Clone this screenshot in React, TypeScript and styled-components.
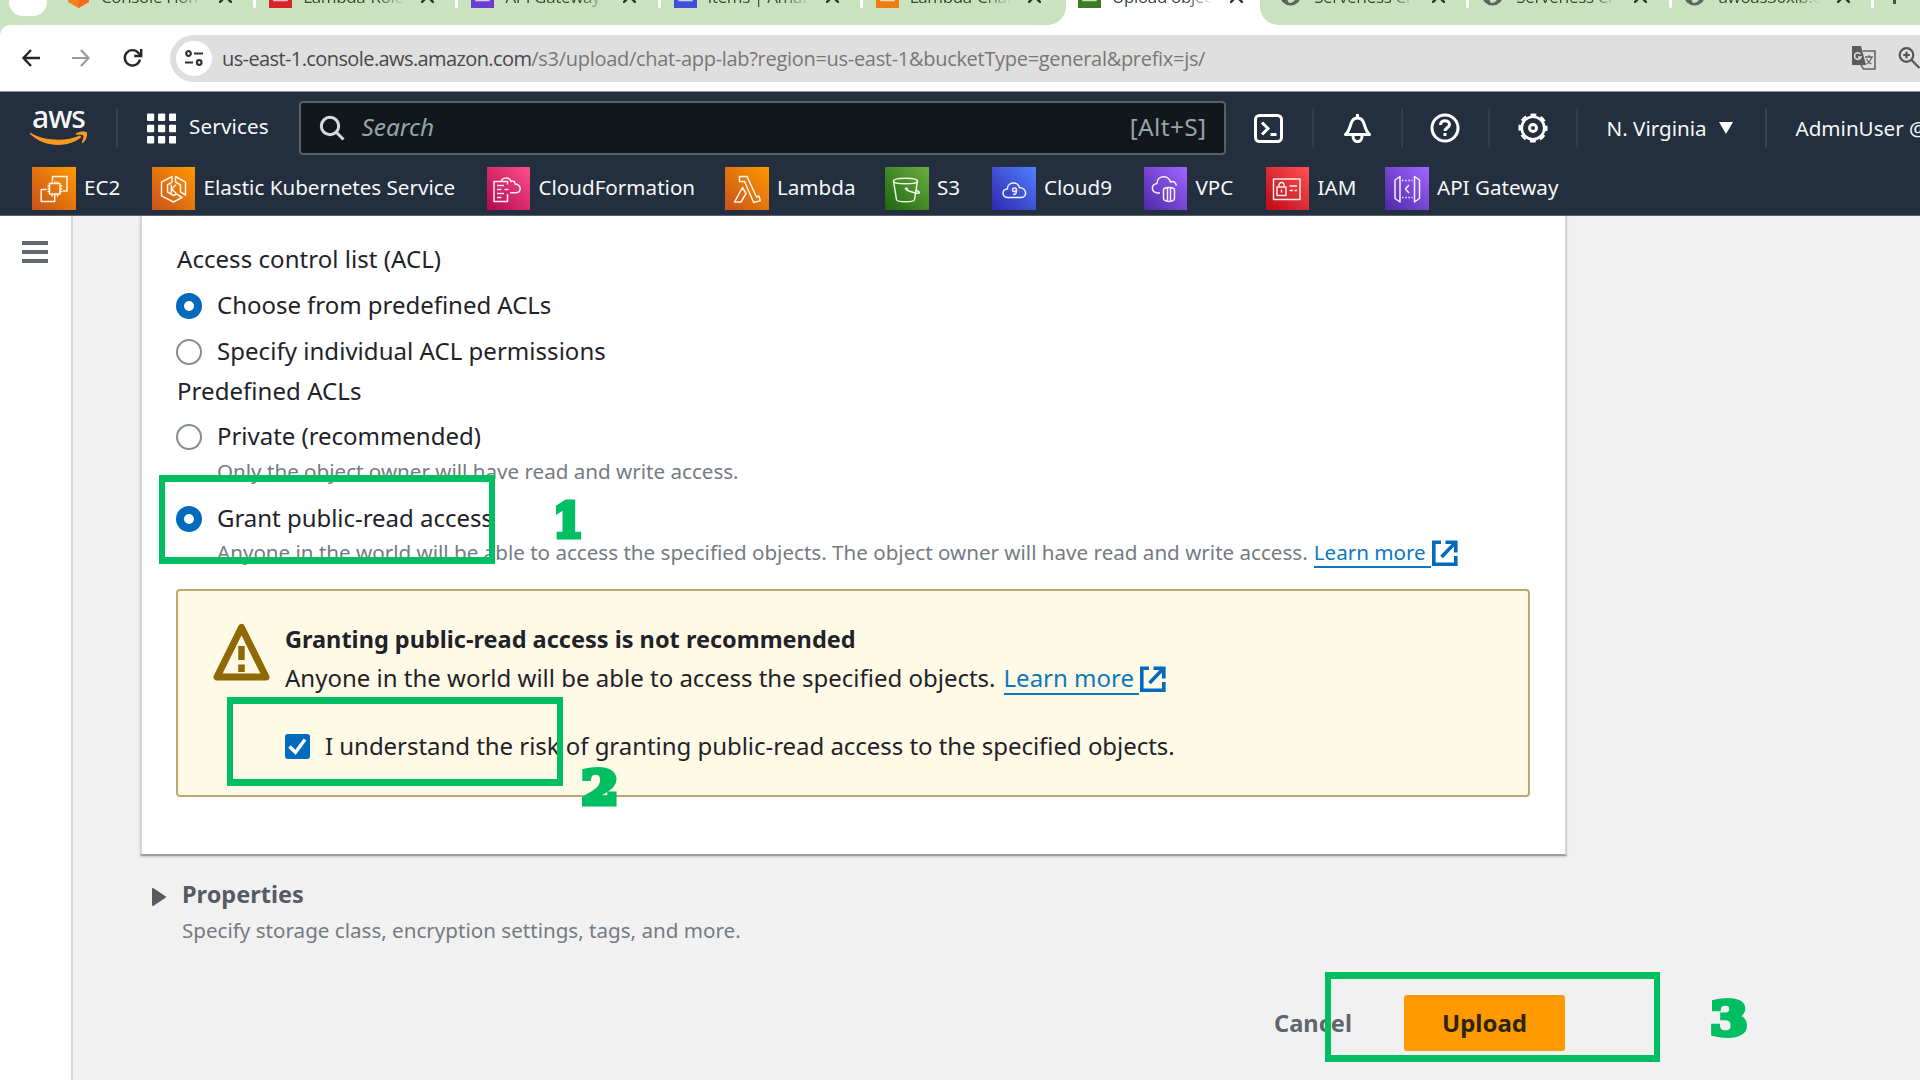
import React from 'react';
import styled, { createGlobalStyle } from 'styled-components';

const colors = {
  navy: '#232f3e',
  ink: '#1f2228',
  gray: '#747b82',
  slate: '#545b64',
  link: '#0d78bd',
  blue: '#006bbd',
  mark: '#00bf63',
};

const Global = createGlobalStyle`
  * { box-sizing: border-box; }
  html, body { margin: 0; padding: 0; }
  body {
    width: 1920px;
    height: 1080px;
    overflow: hidden;
    background: #f1f1f1;
    color: ${colors.ink};
    font-family: 'Noto Sans', 'Open Sans', sans-serif;
    font-size: 24px;
  }
  svg { display: block; flex: none; }
`;

const Screen = styled.div`
  position: relative;
  width: 1920px;
  height: 1080px;
  overflow: hidden;
  display: flex;
  flex-direction: column;
`;

/* ---------- browser tabs ---------- */

const TabStrip = styled.div`
  height: 25px;
  flex: none;
  display: flex;
  background: #c9e3be;
  padding-left: 9px;
`;

const TabSearch = styled.div`
  width: 38px;
  height: 16px;
  border-radius: 0 0 14px 14px;
  background: #fff;
  margin-right: 8px;
  flex: none;
`;

const Tab = styled.div<{ $active?: boolean; $line?: boolean }>`
  position: relative;
  flex: none;
  width: 202.2px;
  height: 25px;
  padding-left: 12px;
  overflow: ${(p) => (p.$active ? 'visible' : 'hidden')};
  background: ${(p) =>
    p.$active ? 'linear-gradient(#fff, #fff) 0 0 / 194px 25px no-repeat' : 'transparent'};

  &::after {
    content: '';
    display: ${(p) => (p.$line ? 'block' : 'none')};
    position: absolute;
    right: 1px;
    top: 0;
    width: 3px;
    height: 8px;
    border-radius: 0 0 2px 2px;
    background: #fff;
  }
`;

const TabCorner = styled.i<{ $side: 'left' | 'right' }>`
  position: absolute;
  bottom: 0;
  ${(p) => (p.$side === 'left' ? 'left: -18px' : 'left: 194px')};
  width: 18px;
  height: 18px;
  background: radial-gradient(
    circle at ${(p) => (p.$side === 'left' ? '0 0' : '100% 0')},
    transparent 17.5px,
    #fff 18px
  );
`;

const TabBody = styled.div`
  height: 60px;
  margin-top: -34px;
  display: flex;
  align-items: center;
`;

const Favicon = styled.div<{ $bg: string }>`
  width: 23px;
  height: 24px;
  flex: none;
  margin-right: 11px;
  background: ${(p) => p.$bg};
  display: flex;
  align-items: center;
  justify-content: center;
`;

const TabTitle = styled.span`
  width: 101px;
  flex: none;
  overflow: hidden;
  white-space: nowrap;
  font-family: 'Open Sans', 'Noto Sans', sans-serif;
  font-size: 17px;
  letter-spacing: -0.35px;
  padding-top: 1px;
  color: #3b463a;
  mask-image: linear-gradient(90deg, #000 74%, transparent);
`;

const TabClose = styled.div`
  margin-left: 17px;
`;

const NewTab = styled.div`
  width: 3px;
  height: 4px;
  margin: 0 0 0 18px;
  background: #4a5548;
`;

/* ---------- browser toolbar ---------- */

const Toolbar = styled.div`
  height: 66px;
  flex: none;
  background: #c9e3be;
  display: flex;
  align-items: center;
`;

const ToolbarInner = styled.div`
  width: 100%;
  height: 66px;
  background: #fff;
  border-radius: 10px 0 0 0;
  display: flex;
  align-items: center;
  padding-left: 20px;
`;

const NavIcons = styled.div`
  width: 150px;
  flex: none;
  display: flex;
  gap: 28px;
`;

const AddressBar = styled.div`
  flex: 1;
  height: 47px;
  background: #dfdfdf;
  border-radius: 24px 0 0 24px;
  display: flex;
  align-items: center;
  padding-left: 6px;
  overflow: hidden;
`;

const SiteInfo = styled.div`
  width: 36px;
  height: 35px;
  border-radius: 50%;
  background: #fff;
  display: flex;
  align-items: center;
  justify-content: center;
  margin-right: 10px;
  flex: none;
`;

const Url = styled.div`
  width: 1629px;
  flex: none;
  white-space: nowrap;
  font-family: 'Open Sans', 'Noto Sans', sans-serif;
  font-size: 20px;
  letter-spacing: -0.4px;
  color: #777;
  b {
    font-weight: 400;
    letter-spacing: -0.6px;
    color: #484848;
  }
  span { letter-spacing: -0.3px; }
`;

const BarIcons = styled.div`
  display: flex;
  align-items: center;
  gap: 22px;
`;

/* ---------- console header ---------- */

const Header = styled.header`
  height: 125px;
  flex: none;
  background: ${colors.navy};
  border-top: 1px solid #8b929a;
  border-bottom: 1px solid #59636f;
  color: #f6f7f7;
`;

const TopRow = styled.div`
  height: 72px;
  display: flex;
  align-items: center;
`;

const LogoCell = styled.div`
  width: 118px;
  height: 40px;
  padding-left: 30px;
  border-right: 2px solid #36424f;
  flex: none;
`;

const LogoText = styled.div`
  height: 23px;
  line-height: 18px;
  padding-left: 2px;
  font-size: 30px;
  font-weight: 500;
  letter-spacing: -1px;
`;

const Services = styled.div`
  width: 180.5px;
  padding-left: 29px;
  display: flex;
  align-items: center;
  gap: 13px;
  flex: none;
  font-size: 20.6px;
  span { letter-spacing: 0.15px; line-height: 28px; margin-top: -4px; }
`;

const SearchBox = styled.div`
  width: 927px;
  height: 54px;
  flex: none;
  background: #12161d;
  border: 2px solid #576064;
  border-radius: 4px;
  padding: 0 17px 0 18px;
  display: flex;
  align-items: center;
  font-size: 24.4px;
  color: #95a5a6;
  em { flex: 1; padding-left: 17px; line-height: 50px; margin-top: -2px; }
  span { line-height: 50px; margin-top: -2px; letter-spacing: 0.4px; }
`;

const Action = styled.div<{ $w: number; $line?: boolean }>`
  width: ${(p) => p.$w}px;
  height: 40px;
  flex: none;
  display: flex;
  align-items: center;
  justify-content: center;
  border-right: ${(p) => (p.$line ? '2px solid #313d4b' : 'none')};
`;

const MenuText = styled.div<{ $w: number; $line?: boolean }>`
  width: ${(p) => p.$w}px;
  height: 40px;
  flex: none;
  padding-left: 29px;
  display: flex;
  align-items: center;
  gap: 12px;
  white-space: nowrap;
  font-size: 20.6px;
  border-right: ${(p) => (p.$line ? '2px solid #36424f' : 'none')};
  span { margin-top: -1px; }
`;

const Shortcuts = styled.nav`
  display: grid;
  grid-template-columns: 119.5px 335px 238.5px 160px 107px 151.5px 122px 119.5px 200px;
  padding: 3px 0 0 32px;
`;

const Shortcut = styled.a`
  display: flex;
  align-items: center;
  gap: 8.5px;
  height: 43px;
  font-size: 20.6px;
  white-space: nowrap;
  span { margin-top: -3px; }
`;

const Tile = styled.div<{ $from: string; $to: string }>`
  width: 43.5px;
  height: 43px;
  flex: none;
  display: flex;
  align-items: center;
  justify-content: center;
  background: linear-gradient(45deg, ${(p) => p.$from}, ${(p) => p.$to});
`;

/* ---------- page ---------- */

const Page = styled.div`
  flex: 1;
  display: flex;
  min-height: 0;
`;

const Sidebar = styled.aside`
  width: 73px;
  flex: none;
  background: #fff;
  border-right: 2px solid #d6d7d8;
  padding: 25px 0 0 22px;
`;

const Burger = styled.div`
  width: 26px;
  height: 22px;
  border-top: 4px solid #62686f;
  border-bottom: 4px solid #62686f;
  padding-top: 5px;
  &::before {
    content: '';
    display: block;
    height: 4px;
    background: #62686f;
  }
`;

const Main = styled.main`
  flex: 1;
  padding-left: 67px;
`;

const Panel = styled.section`
  width: 1427px;
  height: 640px;
  background: #fff;
  border: solid #d3d5d6;
  border-width: 0 2px 2px 2px;
  border-bottom-color: #9aa1a7;
  box-shadow: 0 1px 2px rgba(0, 28, 36, 0.2);
  padding: 27px 35px 0 34px;
`;

const Label = styled.div<{ $h: number; $mb: number }>`
  height: ${(p) => p.$h}px;
  line-height: ${(p) => p.$h}px;
  margin-bottom: ${(p) => p.$mb}px;
  padding-left: 1px;
  letter-spacing: 0.05px;
`;

const Option = styled.label<{ $h: number; $ls?: number }>`
  height: ${(p) => p.$h}px;
  display: flex;
  align-items: center;
  white-space: nowrap;
  letter-spacing: ${(p) => p.$ls ?? -0.03}px;
  span { line-height: 32px; }
`;

const Radio = styled.i<{ $on?: boolean }>`
  width: 26px;
  height: 26px;
  flex: none;
  margin: 2px 15px 0 0;
  border-radius: 50%;
  background: #fff;
  border: ${(p) => (p.$on ? `8px solid ${colors.blue}` : '2px solid #858c93')};
`;

const Hint = styled.div<{ $h: number; $mb: number }>`
  height: ${(p) => p.$h}px;
  line-height: ${(p) => p.$h + 1}px;
  margin-bottom: ${(p) => p.$mb}px;
  padding-left: 41px;
  font-size: 20.6px;
  color: ${colors.gray};
  white-space: nowrap;
  display: flex;
`;

const Learn = styled.a<{ $gap: number; $h: number }>`
  display: inline-flex;
  margin-left: ${(p) => p.$gap}px;
  color: ${colors.link};
  span {
    height: ${(p) => p.$h}px;
    padding-right: 5px;
    border-bottom: 2px solid ${colors.link};
  }
`;

const Alert = styled.div`
  width: 1354px;
  height: 208px;
  margin-top: 23px;
  border: 2px solid #bfa86f;
  border-radius: 4px;
  background: #fffae6;
  padding: 31px 0 0 35px;
  display: flex;
`;

const AlertBody = styled.div`
  padding-left: 15px;
`;

const AlertTitle = styled.div`
  height: 37px;
  line-height: 35px;
  font-weight: 700;
  font-size: 23.5px;
`;

const AlertText = styled.div`
  height: 38px;
  line-height: 38px;
  display: flex;
  white-space: nowrap;
`;

const CheckRow = styled.label`
  display: flex;
  align-items: center;
  height: 40px;
  margin-top: 28px;
  white-space: nowrap;
  letter-spacing: -0.04px;
`;

const Check = styled.i`
  width: 25px;
  height: 25px;
  margin: 2px 15px 0 0;
  border-radius: 3px;
  background: ${colors.blue};
`;

const Expander = styled.section`
  margin-top: 23px;
  padding-left: 11px;
  display: flex;
  color: ${colors.slate};
  svg { margin: 9px 16px 0 1px; }
`;

const ExpanderTitle = styled.h2`
  margin: 0;
  height: 34px;
  line-height: 31px;
  font-size: 23.5px;
  font-weight: 700;
`;

const ExpanderText = styled.p`
  margin: 0;
  line-height: 35px;
  font-size: 20.6px;
  color: ${colors.gray};
`;

const Footer = styled.footer`
  width: 1425px;
  margin-top: 47px;
  height: 56px;
  display: flex;
  justify-content: flex-end;
  align-items: center;
  gap: 52px;
`;

const Cancel = styled.button`
  border: 0;
  padding: 0;
  background: none;
  font: 700 23.6px 'Noto Sans', sans-serif;
  color: #5f656d;
`;

const Upload = styled.button`
  width: 161px;
  height: 56px;
  border: 0;
  border-radius: 3px;
  padding: 0 0 1px;
  background: #ff9900;
  font: 700 24px 'Noto Sans', sans-serif;
  color: #2b2413;
`;

/* ---------- tutorial annotations ---------- */

const Frame = styled.div<{ $x: number; $y: number; $w: number; $h: number }>`
  position: absolute;
  left: ${(p) => p.$x}px;
  top: ${(p) => p.$y}px;
  width: ${(p) => p.$w}px;
  height: ${(p) => p.$h}px;
  border: solid ${colors.mark};
  border-width: 7px 6.5px;
`;

const Step = styled.div<{ $x: number; $y: number; $stretch?: number }>`
  position: absolute;
  left: ${(p) => p.$x}px;
  top: ${(p) => p.$y}px;
  width: 60px;
  text-align: center;
  line-height: 60px;
  font-family: 'DejaVu Serif', serif;
  font-weight: 700;
  font-size: 47px;
  color: ${colors.mark};
  -webkit-text-stroke: 5px ${colors.mark};
  stroke-linejoin: round;
  transform: scaleX(${(p) => p.$stretch ?? 1});
`;

/* ---------- icons ---------- */

const Line = ({ d }: { d: string }) => (
  <svg width="40" height="40" viewBox="0 0 40 40" fill="none" stroke="#fff" strokeOpacity=".92" strokeWidth="1.5" strokeLinejoin="round">
    <path d={d} />
  </svg>
);

const tiles = [
  {
    name: 'EC2', from: '#c8511b', to: '#ff9900',
    d: 'M15.500 14.500h10.500v10.500h-10.500zM18 12.500v2M20.800 12.500v2M23.500 12.500v2M18 25v2.500M20.800 25v2.500M23.500 25v2.500M13.500 17h2M13.500 19.800h2M13.500 22.500h2M26 17h2.300M26 19.800h2.300M26 22.500h2.300M18.500 12V7.500h14.500v14.500h-4M12.500 20.500H7.200v12h13.500v-5',
  },
  {
    name: 'Elastic Kubernetes Service', from: '#c8511b', to: '#ff9900',
    d: 'M19 7.500L8.500 13.200v13.600L20.500 33l8.500-4.500-5.500-3.500-3 1.500-6-3.500v-7l4.500-2.800zM22.500 7.500l10 5.700V26l-5-3.200V16l-5-3zM18.300 15.700v8.500M23 15.700l-4.300 4.300 4.300 4.200',
  },
  {
    name: 'CloudFormation', from: '#b0084d', to: '#ff4f8b',
    d: 'M19.500 15.500v-3H6v20h13.500v-7.500M9 16.500h7M9 20.500h4.500M9 24.500h7M9 28.500h4.500M16.500 20.500h4M13.500 12.500c0-4 8-5 9.500 0 2.500-1.500 4 .5 4 2.500 7 .8 6.500 8.700 1 8.700h-6',
  },
  {
    name: 'Lambda', from: '#c8511b', to: '#ff9900',
    d: 'M12.500 7.500h7.500l9.500 20.500 2.500-1 1.200 4.700-6.500 1.800L17.500 12.500h-5zM15.500 18.500L7.500 33h6.500l5-8.500z',
  },
  {
    name: 'S3', from: '#1b660f', to: '#6cae3e',
    d: 'M6.500 12c0-3.700 24-3.700 24 0s-24 3.700-24 0l3 18.500c.5 3 17.500 3 18 0l3-18.500M19 20.500c4 2.500 12 4.500 13.300 3.500.7-.8-1.300-2-3.300-3M19.500 20.200l-1.200-.6 1.200-.6 1 .8z',
  },
  {
    name: 'Cloud9', from: '#2e27ad', to: '#527fff',
    d: 'M14 28.500c-6.500 0-6.500-8.500-.7-8.500 0-7.500 11.200-8 12.200-1.200 7-.5 8.500 9.700 1.500 9.700zM22.500 20.800c0-2.400-4-2.400-4 0s4 2.400 4 0c0 3.700-.5 4.700-3.500 4.700',
  },
  {
    name: 'VPC', from: '#4d27a8', to: '#a166ff',
    d: 'M15 24h-2.500c-7-1-6.500-8.500-.5-9.500 0-8.500 11.500-9 13.500-1.500 4-1.500 5 1 6 3.500M24 18.500c3 0 5.500 1 5.500 2.500v8c0 4.500-11 4.500-11 0v-8c0-1.500 2.500-2.500 5.500-2.500zM22.500 19v13.500M25.500 19v13.500',
  },
  {
    name: 'IAM', from: '#bd0816', to: '#ff5252',
    d: 'M6.500 10h26.500v20.500h-26.500zM10 18h9v8.500h-9zM11.800 18c0-6 5.500-6 5.500 0M14.500 20.500v3M22.500 17h7.500M22.500 21.500h3.500M27.500 21.500h2.500',
  },
  {
    name: 'API Gateway', from: '#4d27a8', to: '#a166ff',
    d: 'M8 11l5-3.500v25.500l-5-3.500zM32.500 11l-5-3.500v25.500l5-3.500zM22 16l-3.500 4 3.500 4M15 11.500h1.500M18.200 11.500h1.500M21.400 11.500h1.500M24.500 11.500h1M15 28.500h1.500M18.200 28.500h1.500M21.400 28.500h1.500M24.500 28.500h1',
  },
];

const External = ({ top }: { top: number }) => (
  <svg width="27" height={27 + top} viewBox={`-1 ${-top} 27 ${27 + top}`} fill="none" stroke="#006bbd" strokeWidth="3.6">
    <path d="M9 2.300H1.800v22h22V16M13.500 2.300h10.300v10.200M23 3L9.500 17" />
  </svg>
);

const Globe = () => (
  <svg width="22" height="24" viewBox="0 0 22 24">
    <circle cx="9.500" cy="11" r="10.500" fill="#5c655b" />
    <path d="M8 19c-1-2-3-4 0-5s3 2 7-1c0 3-3 6-7 6z" fill="#c9e3be" />
  </svg>
);

const Close = () => (
  <svg width="13" height="13" viewBox="0 0 13 13" stroke="#2f3a2e" strokeWidth="2.400">
    <path d="M0 0L13 13M13 0L0 13" />
  </svg>
);

type TabInfo = { title: string; bg?: string; active?: boolean; line?: boolean; kind?: string };

const tabs: TabInfo[] = [
  { title: 'Console Home', kind: 'cube', line: true },
  { title: 'Lambda-Role', bg: '#d9232b', line: true },
  { title: 'API Gateway', bg: '#6a3ed0', line: true },
  { title: 'Items | Amazon', bg: '#3f51db', line: true },
  { title: 'Lambda-Chat', bg: '#f07d10' },
  { title: 'Upload objects', bg: '#3a7d22', active: true },
  { title: 'Serverless Chat', kind: 'globe', line: true },
  { title: 'Serverless Chat', kind: 'globe', line: true },
  { title: 'awoas30xib.ex', kind: 'globe', line: true },
];

const TabItem = ({ tab }: { tab: TabInfo }) => (
  <Tab $active={tab.active} $line={tab.line}>
    {tab.active && <TabCorner $side="left" />}
    {tab.active && <TabCorner $side="right" />}
    <TabBody>
      <Favicon $bg={tab.bg ?? 'transparent'}>
        {tab.kind === 'globe' && <Globe />}
        {tab.kind === 'cube' && (
          <svg width="23" height="24" viewBox="0 0 23 24">
            <path d="M11.500 0L22 5v13l-10.500 6L1 18V5z" fill="#f58220" />
            <path d="M11.500 10L22 5v13l-10.500 6z" fill="#f9691c" />
          </svg>
        )}
        {!tab.kind && (
          <svg width="15" height="15" viewBox="0 0 15 15" fill="none" stroke="#fff" strokeOpacity=".75" strokeWidth="1.500">
            <path d="M1 0v11.500h13V0" />
          </svg>
        )}
      </Favicon>
      <TabTitle>{tab.title}</TabTitle>
      <TabClose><Close /></TabClose>
    </TabBody>
  </Tab>
);

export default function App() {
  return (
    <Screen>
      <Global />
      <TabStrip>
        <TabSearch />
        {tabs.map((t, i) => <TabItem key={i} tab={t} />)}
        <NewTab />
      </TabStrip>

      <Toolbar>
        <ToolbarInner>
          <NavIcons>
            <svg width="22" height="22" viewBox="0 0 22 22" fill="none" stroke="#262626" strokeWidth="2.400">
              <path d="M20 11H4M11 3L3.500 11l7.500 8" />
            </svg>
            <svg width="22" height="22" viewBox="0 0 22 22" fill="none" stroke="#9b9b9b" strokeWidth="2.200">
              <path d="M2 11h16M11 3l7.500 8L11 19" />
            </svg>
            <svg width="24" height="22" viewBox="-1.500 0 24 22" fill="none" stroke="#262626" strokeWidth="2.400">
              <path d="M18.500 12.500A7.700 7.700 0 1 1 17 6l2 2.200M19.700 2v7h-7" />
            </svg>
          </NavIcons>
          <AddressBar>
            <SiteInfo>
              <svg width="18" height="16" viewBox="0 0 18 16" fill="none" stroke="#333" strokeWidth="2.200">
                <circle cx="3.500" cy="3.500" r="2.300" />
                <path d="M9 3.500h9M0 12.500h8" />
                <circle cx="14.200" cy="12.500" r="2.300" />
              </svg>
            </SiteInfo>
            <Url><b>us-east-1.console.aws.amazon.com</b><span>/s3/upload/chat-app-lab?region=us-east-1&amp;bucketType=general&amp;prefix=js/</span></Url>
            <BarIcons>
              <svg width="25" height="24" viewBox="0 0 25 24" fill="none">
                <path d="M12 5h12v18H12.500l-2.500-4" stroke="#666" strokeWidth="1.600" />
                <path d="M1 0h9l5 19H1z" fill="#5c5c5c" />
                <path d="M9.500 8A3.300 3.300 0 1 0 10 11H7" stroke="#dfdfdf" strokeWidth="1.500" />
                <path d="M14 11h8M18 9v2M20.500 11c-.5 3-3 6-5 7M15.500 13c1 2 3.500 4.500 5 5" stroke="#666" strokeWidth="1.300" />
              </svg>
              <svg width="24" height="24" viewBox="0 0 24 24" fill="none" stroke="#555" strokeWidth="2.200">
                <circle cx="8.500" cy="9" r="6.800" />
                <path d="M13.500 14l8 8M8.500 5.700v6.600M5.200 9h6.600" />
              </svg>
            </BarIcons>
          </AddressBar>
        </ToolbarInner>
      </Toolbar>

      <Header>
        <TopRow>
          <LogoCell>
            <LogoText>aws</LogoText>
            <svg width="58" height="17" viewBox="0 0 58 17">
              <path d="M0 1.500C14 10 35 11 50 4.500l1.500 1.800C36 18 14 16 0 3z" fill="#f79a1f" />
              <path d="M46 2.200c4-2 9-2 11-.7.500 4-1 8-4 10.500l-1.200-.6c1.200-3 2-5.500 1.400-7.200-1.700-.7-4.700-.5-7-.4z" fill="#f79a1f" />
            </svg>
          </LogoCell>
          <Services>
            <svg width="29" height="31" viewBox="0 0 29 31" fill="#fff">
              {[0, 11, 22].map((x) => [0.5, 11.700, 23].map((y) => <rect key={`${x}-${y}`} x={x} y={y} width="7.200" height="7.500" rx="1" />))}
            </svg>
            <span>Services</span>
          </Services>
          <SearchBox>
            <svg width="26" height="26" viewBox="0 0 26 26" fill="none" stroke="#d5dbdb" strokeWidth="3">
              <circle cx="11" cy="11" r="8.700" />
              <path d="M17 17l7.500 7.500" />
            </svg>
            <em>Search</em>
            <span>[Alt+S]</span>
          </SearchBox>
          <Action $w={88} $line>
            <svg width="29" height="29" viewBox="0 0 29 29" fill="none" stroke="#fff" strokeWidth="3">
              <rect x="1.500" y="1.500" width="26" height="26" rx="4" />
              <path d="M8 8.500l6 6-6 6M16.500 20.500h6" />
            </svg>
          </Action>
          <Action $w={89} $line>
            <svg width="29" height="29" viewBox="0 0 29 29" fill="none" stroke="#fff" strokeWidth="3" strokeLinejoin="round">
              <path d="M14.500 0v4M2.500 20.500C9 15.500 6 4 14.500 4S20 15.500 26.500 20.500z" />
              <path d="M10 22c0 7.500 9 7.500 9 0" />
            </svg>
          </Action>
          <Action $w={87} $line>
            <svg width="30" height="30" viewBox="0 0 30 30" fill="none" stroke="#fff" strokeWidth="3">
              <circle cx="15" cy="15" r="13" />
              <path d="M10.500 12c0-6 9-5.500 9-.5 0 3-4.500 3.500-4.500 6.500M15 20v3" />
            </svg>
          </Action>
          <Action $w={88} $line>
            <svg width="30" height="30" viewBox="0 0 30 30" fill="none" stroke="#fff">
              <circle cx="15" cy="15" r="11.300" strokeWidth="2.600" />
              <circle cx="15" cy="15" r="13.200" strokeWidth="2.800" strokeDasharray="5.800 4.567" strokeDashoffset="2.900" />
              <circle cx="15" cy="15" r="3.500" strokeWidth="3" />
            </svg>
          </Action>
          <MenuText $w={189} $line>
            <span>N. Virginia</span>
            <svg width="14" height="12" viewBox="0 0 14 12"><path d="M0 0h14L7 12z" fill="#fff" /></svg>
          </MenuText>
          <MenuText $w={200}><span>AdminUser @ chat</span></MenuText>
        </TopRow>
        <Shortcuts>
          {tiles.map((t) => (
            <Shortcut key={t.name}>
              <Tile $from={t.from} $to={t.to}><Line d={t.d} /></Tile>
              <span>{t.name}</span>
            </Shortcut>
          ))}
        </Shortcuts>
      </Header>

      <Page>
        <Sidebar><Burger /></Sidebar>
        <Main>
          <Panel>
            <Label $h={32} $mb={7}>Access control list (ACL)</Label>
            <Option $h={46}><Radio $on /><span>Choose from predefined ACLs</span></Option>
            <Option $h={46} $ls={0.04}><Radio /><span>Specify individual ACL permissions</span></Option>
            <Label $h={34} $mb={8}>Predefined ACLs</Label>
            <Option $h={40}><Radio /><span>Private (recommended)</span></Option>
            <Hint $h={30} $mb={12}>Only the object owner will have read and write access.</Hint>
            <Option $h={40}><Radio $on /><span>Grant public-read access</span></Option>
            <Hint $h={28} $mb={0}>
              Anyone in the world will be able to access the specified objects. The object owner will have read and write access.
              <Learn $gap={6} $h={30}><span>Learn more</span><External top={2} /></Learn>
            </Hint>
            <Alert>
              <svg width="57" height="60" viewBox="0 0 57 60" fill="none" stroke="#906806">
                <path d="M28.500 5.500L4 55h49z" strokeWidth="7" strokeLinejoin="round" />
                <path d="M28.500 24v14M28.500 42.500v7.500" strokeWidth="6.500" />
              </svg>
              <AlertBody>
                <AlertTitle>Granting public-read access is not recommended</AlertTitle>
                <AlertText>
                  Anyone in the world will be able to access the specified objects.
                  <Learn $gap={8} $h={36}><span>Learn more</span><External top={7} /></Learn>
                </AlertText>
                <CheckRow>
                  <Check>
                    <svg width="25" height="25" viewBox="0 0 25 25" fill="none" stroke="#fff" strokeWidth="3.400">
                      <path d="M4.500 12.500l6 6L20 5.500" />
                    </svg>
                  </Check>
                  I understand the risk of granting public-read access to the specified objects.
                </CheckRow>
              </AlertBody>
            </Alert>
          </Panel>
          <Expander>
            <svg width="14" height="18" viewBox="0 0 14 18"><path d="M1 1v16l12-8z" fill={colors.slate} stroke={colors.slate} strokeWidth="2" strokeLinejoin="round" /></svg>
            <div>
              <ExpanderTitle>Properties</ExpanderTitle>
              <ExpanderText>Specify storage class, encryption settings, tags, and more.</ExpanderText>
            </div>
          </Expander>
          <Footer>
            <Cancel>Cancel</Cancel>
            <Upload>Upload</Upload>
          </Footer>
        </Main>
      </Page>

      <Frame $x={159} $y={475} $w={335.500} $h={89} />
      <Frame $x={227} $y={696.500} $w={335.500} $h={89.500} />
      <Frame $x={1324.700} $y={972} $w={335.800} $h={90} />
      <Step $x={537.500} $y={491} $stretch={0.92}>1</Step>
      <Step $x={569.500} $y={758} $stretch={1.14}>2</Step>
      <Step $x={1699} $y={989} $stretch={1.14}>3</Step>
    </Screen>
  );
}
